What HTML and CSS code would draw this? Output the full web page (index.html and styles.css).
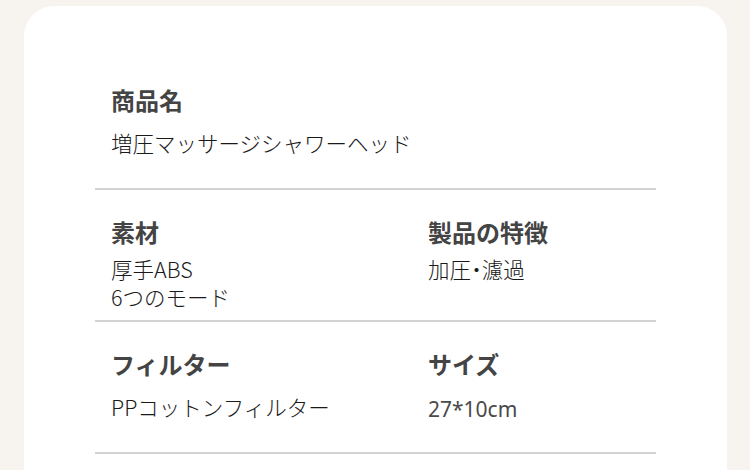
FILE: index.html
```html
<!DOCTYPE html>
<html lang="ja">
<head>
<meta charset="utf-8">
<link rel="stylesheet" href="styles.css">
</head>
<body>
<div class="card">
  <div class="row">
    <div class="cell">
      <div class="label">商品名</div>
      <div class="value">増圧マッサージシャワーヘッド</div>
    </div>
    <div class="cell"></div>
  </div>
  <div class="row row-tight">
    <div class="cell">
      <div class="label">素材</div>
      <div class="value">厚手ABS<br>6つのモード</div>
    </div>
    <div class="cell">
      <div class="label">製品の特徴</div>
      <div class="value">加圧<span class="dot">・</span>濾過</div>
    </div>
  </div>
  <div class="row">
    <div class="cell">
      <div class="label">フィルター</div>
      <div class="value">PPコットンフィルター</div>
    </div>
    <div class="cell">
      <div class="label">サイズ</div>
      <div class="value value-latin">27*10cm</div>
    </div>
  </div>
</div>
</body>
</html>
```

FILE: styles.css
```css
html, body {
  margin: 0;
  padding: 0;
}
body {
  width: 750px;
  height: 470px;
  overflow: hidden;
  background: #f7f4f0;
  font-family: "Noto Sans CJK JP", "Noto Sans", sans-serif;
}
.card {
  margin: 6px 23px 0 24px;
  height: 520px;
  background: #ffffff;
  border-radius: 30px;
  padding: 52px 71px 0 71px;
  box-sizing: border-box;
}
.row {
  height: 132px;
  box-sizing: border-box;
  border-bottom: 2px solid #d3d3d3;
  padding: 27px 16px 0 16px;
  display: grid;
  grid-template-columns: 317px 1fr;
}
.cell {
  display: flex;
  flex-direction: column;
  gap: 14px;
}
.row-tight .cell {
  gap: 8px;
}
.label {
  font-size: 24px;
  line-height: 30px;
  font-weight: 700;
  color: #444444;
}
.value {
  font-size: 21.5px;
  line-height: 28px;
  font-weight: 300;
  color: #1a1a1a;
}
.dot {
  font-feature-settings: "palt";
}
.value-latin {
  font-family: "Noto Sans", "Noto Sans CJK JP", sans-serif;
  font-weight: 400;
  font-size: 21px;
  color: #4a4a4a;
  padding-top: 2px;
}
```
